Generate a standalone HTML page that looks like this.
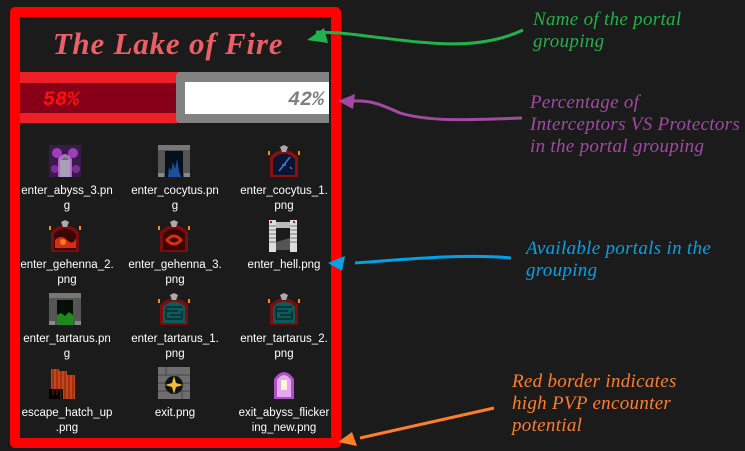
<!DOCTYPE html>
<html><head><meta charset="utf-8"><style>
*{margin:0;padding:0;box-sizing:border-box}
body{width:745px;height:451px;background:#1b1b1b;position:relative;overflow:hidden;font-family:"Liberation Sans",sans-serif}
.abs{position:absolute}
.box{left:10px;top:7px;width:331px;height:441px;border:10px solid #ff0000;border-radius:5px}
.title{left:20px;top:26px;width:296px;text-align:center;font-family:"Liberation Serif",serif;font-style:italic;font-weight:bold;font-size:31px;color:#eb5f66;letter-spacing:0.8px}
.pct{font-family:"Liberation Mono",monospace;font-style:italic;font-weight:bold;font-size:20px}
.lbl{width:110px;text-align:center;color:#fff;font-size:11.5px;line-height:15px}
.ann{font-family:"Liberation Serif",serif;font-style:italic;font-size:19px;line-height:22px;letter-spacing:0.3px}
svg.ic{position:absolute;width:32px;height:32px}
</style></head><body>
<div class="abs box"></div>
<div class="abs title">The Lake of Fire</div>
<div class="abs" style="left:20px;top:72px;width:160px;height:51px;background:#ee1f27"></div>
<div class="abs" style="left:20px;top:83px;width:160px;height:30px;background:#880017"></div>
<div class="abs pct" style="left:43px;top:89px;color:#ff1010">58%</div>
<div class="abs" style="left:176px;top:72px;width:153px;height:51px;background:#828282;border-radius:4px 0 0 4px"></div>
<div class="abs" style="left:185px;top:82px;width:144px;height:32px;background:#fff"></div>
<div class="abs pct" style="left:288px;top:89px;color:#7f7f7f">42%</div>

<!-- icons -->
<svg class="ic" style="left:49px;top:145px" viewBox="0 0 32 32"><rect width="32" height="32" fill="#3a1a4a"/><circle cx="8" cy="8" r="5" fill="#9b3fb5"/><circle cx="24" cy="8" r="5" fill="#9b3fb5"/><circle cx="6" cy="24" r="4" fill="#7a2f95"/><circle cx="27" cy="24" r="4" fill="#7a2f95"/><path d="M9 32V14Q16 4 23 14V32Z" fill="#c05ed6"/><path d="M11 32V15Q16 8 21 15V32Z" fill="#a8a0b8"/><path d="M12 15Q16 9 20 15Z" fill="#2a9a3a"/></svg>
<svg class="ic" style="left:158px;top:145px" viewBox="0 0 32 32"><rect width="32" height="32" fill="#555"/><rect x="0" y="0" width="32" height="5" fill="#777"/><rect x="7" y="6" width="18" height="26" fill="#06101c"/><path d="M10 32L11 22 13 26 15 17 17 24 19 14 21 26 23 32Z" fill="#1d4f9a"/><rect x="0" y="28" width="6" height="4" fill="#888"/><rect x="26" y="28" width="6" height="4" fill="#888"/></svg>
<svg class="ic" style="left:268px;top:145px" viewBox="0 0 32 32"><path d="M2 32V12Q16 -2 30 12V32Z" fill="#8b1010"/><path d="M5 30V14Q16 3 27 14V30Z" fill="#0a1530"/><path d="M11 26L22 12M14 20h4M22 22l2 2" stroke="#3b7bd8" stroke-width="1.5"/><path d="M12 2L16 0 20 2 18 7H14Z" fill="#aaa"/><rect x="0" y="6" width="2" height="4" fill="#f80"/><rect x="30" y="6" width="2" height="4" fill="#f80"/></svg>

<svg class="ic" style="left:49px;top:220px" viewBox="0 0 32 32"><path d="M2 32V12Q16 -2 30 12V32Z" fill="#7a0d0d"/><path d="M5 30V14Q16 3 27 14V30Z" fill="#3a0505"/><path d="M6 20Q12 14 18 20T27 18V28H6Z" fill="#d53010"/><circle cx="14" cy="22" r="3" fill="#ff7a20"/><path d="M12 2L16 0 20 2 18 7H14Z" fill="#aaa"/><rect x="0" y="6" width="2" height="4" fill="#f80"/><rect x="30" y="6" width="2" height="4" fill="#f80"/></svg>
<svg class="ic" style="left:158px;top:220px" viewBox="0 0 32 32"><path d="M2 32V12Q16 -2 30 12V32Z" fill="#7a0d0d"/><path d="M5 30V14Q16 3 27 14V30Z" fill="#3a0505"/><path d="M9 20Q16 12 23 20Q16 28 9 20Z" fill="none" stroke="#d53010" stroke-width="3"/><path d="M12 2L16 0 20 2 18 7H14Z" fill="#aaa"/><rect x="0" y="6" width="2" height="4" fill="#f80"/><rect x="30" y="6" width="2" height="4" fill="#f80"/></svg>
<svg class="ic" style="left:267px;top:220px" viewBox="0 0 32 32"><rect x="2" y="0" width="7" height="32" fill="#ddd"/><rect x="23" y="0" width="7" height="32" fill="#ddd"/><rect x="9" y="2" width="14" height="6" fill="#bbb"/><rect x="3" y="1" width="2" height="2" fill="#e00"/><rect x="26" y="1" width="2" height="2" fill="#e00"/><path d="M9 22L23 18V30H9Z" fill="#555"/><path d="M2 6h7M2 10h7M2 14h7M2 18h7M2 22h7M23 6h7M23 10h7M23 14h7M23 18h7M23 22h7" stroke="#777"/></svg>

<svg class="ic" style="left:49px;top:293px" viewBox="0 0 32 32"><rect width="32" height="32" fill="#555"/><rect x="0" y="0" width="32" height="5" fill="#777"/><rect x="8" y="7" width="16" height="25" fill="#041004"/><path d="M8 32V22L12 20 16 23 20 19 24 22V32Z" fill="#1c8a1c"/><rect x="0" y="28" width="6" height="4" fill="#888"/><rect x="26" y="28" width="6" height="4" fill="#888"/></svg>
<svg class="ic" style="left:158px;top:293px" viewBox="0 0 32 32"><path d="M2 32V12Q16 -2 30 12V32Z" fill="#7a0d0d"/><path d="M5 30V14Q16 3 27 14V30Z" fill="#0f5b5c"/><path d="M8 14h16M8 18h12M12 22h12M8 26h16M8 14v12M24 18v8" stroke="#062a2a" stroke-width="1.5"/><path d="M12 2L16 0 20 2 18 7H14Z" fill="#aaa"/><rect x="0" y="6" width="2" height="4" fill="#f80"/><rect x="30" y="6" width="2" height="4" fill="#f80"/></svg>
<svg class="ic" style="left:268px;top:293px" viewBox="0 0 32 32"><path d="M2 32V12Q16 -2 30 12V32Z" fill="#7a0d0d"/><path d="M5 30V14Q16 3 27 14V30Z" fill="#0f5b5c"/><path d="M8 14h16M8 18h12M12 22h12M8 26h16M8 14v12M24 18v8" stroke="#062a2a" stroke-width="1.5"/><path d="M12 2L16 0 20 2 18 7H14Z" fill="#aaa"/><rect x="0" y="6" width="2" height="4" fill="#f80"/><rect x="30" y="6" width="2" height="4" fill="#f80"/></svg>

<svg class="ic" style="left:49px;top:367px" viewBox="0 0 32 32"><rect x="2" y="2" width="8" height="26" fill="#c8441a"/><rect x="10" y="4" width="8" height="28" fill="#c8441a"/><rect x="18" y="8" width="8" height="24" fill="#c8441a"/><rect x="0" y="22" width="14" height="10" fill="#000"/><path d="M4 2v26M8 2v26M12 4v28M16 4v28M20 8v24M24 8v24" stroke="#7a1f08"/></svg>
<svg class="ic" style="left:158px;top:367px" viewBox="0 0 32 32"><rect width="32" height="32" fill="#6e6e6e"/><path d="M0 8h32M0 16h32M0 24h32M8 0v8M20 8v8M10 16v8M24 24v8" stroke="#444"/><circle cx="16" cy="18" r="9" fill="#111"/><path d="M16 9L18 16 25 18 18 20 16 27 14 20 7 18 14 16Z" fill="#f0c030"/></svg>
<svg class="ic" style="left:268px;top:367px" viewBox="0 0 32 32"><path d="M6 32V12Q16 -2 26 12V32Z" fill="#b04fc8"/><path d="M9 30V13Q16 3 23 13V30Z" fill="#e6a8f0"/><rect x="13" y="13" width="6" height="10" fill="#fff8d0"/></svg>

<!-- labels -->
<div class="abs lbl" style="left:12px;top:184px">enter_abyss_3.pn<br>g</div>
<div class="abs lbl" style="left:120px;top:184px">enter_cocytus.pn<br>g</div>
<div class="abs lbl" style="left:229px;top:184px">enter_cocytus_1.<br>png</div>
<div class="abs lbl" style="left:12px;top:258px">enter_gehenna_2.<br>png</div>
<div class="abs lbl" style="left:120px;top:258px">enter_gehenna_3.<br>png</div>
<div class="abs lbl" style="left:229px;top:258px">enter_hell.png</div>
<div class="abs lbl" style="left:12px;top:332px">enter_tartarus.pn<br>g</div>
<div class="abs lbl" style="left:120px;top:332px">enter_tartarus_1.<br>png</div>
<div class="abs lbl" style="left:229px;top:332px">enter_tartarus_2.<br>png</div>
<div class="abs lbl" style="left:12px;top:406px">escape_hatch_up<br>.png</div>
<div class="abs lbl" style="left:120px;top:406px">exit.png</div>
<div class="abs lbl" style="left:229px;top:406px">exit_abyss_flicker<br>ing_new.png</div>

<!-- arrows -->
<svg class="abs" style="left:0;top:0" width="745" height="451">
<path d="M523 30C470 55 410 40 340 33L316 32" stroke="#22b14c" stroke-width="3" fill="none"/>
<path d="M307 40L324 28 328 43Z" fill="#22b14c"/>
<path d="M522 118C470 120 430 122 400 113 380 104 370 100 352 101" stroke="#a349a4" stroke-width="3" fill="none"/>
<path d="M338 101L355 94 353 109Z" fill="#a349a4"/>
<path d="M511 258C470 254 420 258 355 263" stroke="#00a2e8" stroke-width="3" fill="none"/>
<path d="M328 263L345 256 342 271Z" fill="#00a2e8"/>
<path d="M494 408L360 438" stroke="#ff7f27" stroke-width="3" fill="none"/>
<path d="M338 442L352 432 357 446Z" fill="#ff7f27"/>
</svg>

<div class="abs ann" style="left:533px;top:9px;color:#22b14c">Name of the portal<br>grouping</div>
<div class="abs ann" style="left:530px;top:92px;color:#a349a4">Percentage of<br>Interceptors VS Protectors<br>in the portal grouping</div>
<div class="abs ann" style="left:526px;top:238px;color:#00a2e8">Available portals in the<br>grouping</div>
<div class="abs ann" style="left:512px;top:371px;color:#ff7f27">Red border indicates<br>high PVP encounter<br>potential</div>
</body></html>
